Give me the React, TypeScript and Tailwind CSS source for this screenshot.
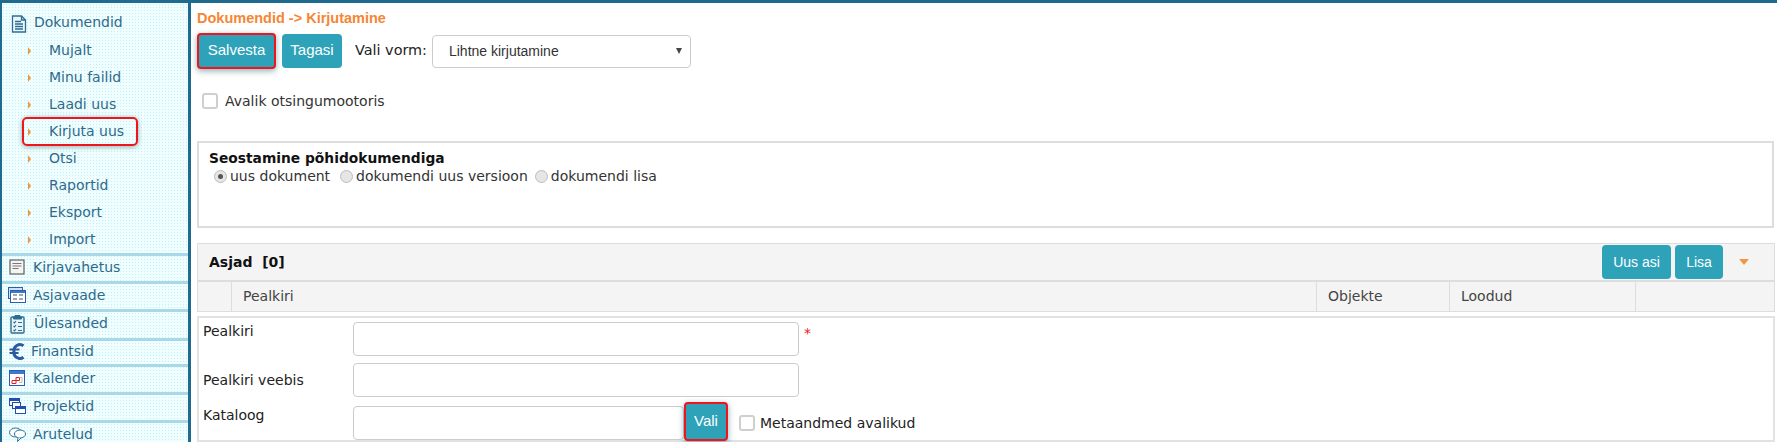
import React from 'react';

const VERDANA = "font-['DejaVu_Sans',sans-serif]";
const ARIAL = "font-['Liberation_Sans',sans-serif]";

const DocIcon = () => (
  <svg width="16" height="18" viewBox="0 0 16 18" fill="none" stroke="#2a6f93" strokeWidth="1.3">
    <path d="M1.5 1h9l4 4v12h-13z" fill="#eef7fb" />
    <path d="M10.5 1v4h4" />
    <path d="M4 6.5h6M4 9h8M4 11.5h8M4 14h8" />
  </svg>
);

const MailIcon = () => (
  <svg width="16" height="16" viewBox="0 0 16 16" fill="none">
    <rect x="1" y="1" width="14" height="14" fill="#f4f4f4" stroke="#444" />
    <path d="M3.5 4.5h9M3.5 7h9M3.5 9.5h6" stroke="#777" />
  </svg>
);

const CaseIcon = () => (
  <svg width="18" height="16" viewBox="0 0 18 16" fill="none">
    <rect x="0.5" y="0.5" width="14" height="11" fill="#cfe3f7" stroke="#2a5fb0" />
    <rect x="2.5" y="3.5" width="15" height="12" fill="#fff" stroke="#2a5fb0" />
    <path d="M3 4h14v2H3z" fill="#3b78cf" />
    <path d="M14 1h1v1h-1z" fill="#e33" />
    <path d="M5 8h4M11 8h4M5 12h4M11 12h4" stroke="#888" strokeWidth="1.5" />
  </svg>
);

const TaskIcon = () => (
  <svg width="15" height="20" viewBox="0 0 15 20" fill="none" stroke="#2a6f93">
    <rect x="1" y="3" width="13" height="16" rx="1" fill="#e9f4f8" strokeWidth="1.4" />
    <path d="M5 3V1.5h5V3h1.500v2h-8V3z" fill="#2a6f93" />
    <path d="M3.500 8l1 1 1.500-2M3.500 12l1 1 1.500-2M3.500 16l1 1 1.500-2M8 8.500h4M8 12.500h4M8 16.500h4" strokeWidth="1.100" />
  </svg>
);

const EuroIcon = () => (
  <svg width="16" height="17" viewBox="0 0 16 17" fill="none">
    <path d="M14.500 2.800A6 6 0 0 0 5 8.500a6 6 0 0 0 9.500 5.700" stroke="#2c5aa0" strokeWidth="3" />
    <path d="M0.500 6.500h10M0.500 10h9" stroke="#2c5aa0" strokeWidth="2" />
  </svg>
);

const CalendarIcon = () => (
  <svg width="16" height="16" viewBox="0 0 16 16" fill="none">
    <rect x="0.500" y="0.500" width="15" height="15" fill="#fff" stroke="#2a5fb0" />
    <path d="M1 1h14v3H1z" fill="#3b78cf" />
    <path d="M3 10.500h4v3H3zM7 7.500h3.500v3H7z" stroke="#e02020" />
    <path d="M10.500 7.500H13v5h-3" stroke="#bbb" />
  </svg>
);

const ProjectIcon = () => (
  <svg width="17" height="16" viewBox="0 0 17 16" fill="none">
    <rect x="0.500" y="0.500" width="10" height="7" fill="#fff" stroke="#1f4fb0" />
    <path d="M1 1h9v2H1z" fill="#1f4fb0" />
    <rect x="3.500" y="4.500" width="8" height="6" fill="#fff" stroke="#1f4fb0" />
    <rect x="6.500" y="8.500" width="10" height="7" fill="#fff" stroke="#1f4fb0" />
    <path d="M7 9h9v2H7z" fill="#1f4fb0" />
  </svg>
);

const ChatIcon = () => (
  <svg width="17" height="15" viewBox="0 0 17 15" fill="none" stroke="#2a6f93">
    <ellipse cx="6.500" cy="5.500" rx="6" ry="4.500" fill="#fff" />
    <ellipse cx="11" cy="7" rx="5.500" ry="4" fill="#fff" />
    <path d="M9 10.500l-0.500 4 3.500-3.500" fill="#fff" />
  </svg>
);

const Arrow = () => (
  <span className="border-y-[4px] border-l-[3px] border-y-transparent border-l-[#f0983e]" />
);

const SubItem = ({ label, marked }: { label: string; marked?: boolean }) => (
  <div
    className={`relative flex h-[27px] items-center pl-[26px] ${
      marked ? 'z-10' : ''
    }`}
  >
    {marked && (
      <div className="absolute left-[20px] top-[-1px] h-[29px] w-[116px] rounded-[5px] border-2 border-[#f0141e] shadow-[0_1px_5px_rgba(0,60,60,0.4)]" />
    )}
    <Arrow />
    <span className="ml-[18px]">{label}</span>
  </div>
);

const MainItem = ({ icon, label, textPad, height }: { icon: React.ReactNode; label: string; textPad: string; height: string }) => (
  <div className={`flex items-center border-t-[3px] border-[#a9d8e8] pb-[3px] ${height}`}>
    <div className="flex w-[6px]" />
    <div className="flex w-[18px] justify-center">{icon}</div>
    <span className={textPad}>{label}</span>
  </div>
);

const Btn = ({ label, className }: { label: string; className: string }) => (
  <button className={`${ARIAL} rounded-[4px] bg-[#2ea2b8] text-center text-white ${className}`}>{label}</button>
);

const CheckBox = () => <span className="h-[16px] w-[16px] shrink-0 rounded-[3px] border-2 border-[#cfcfcf] bg-white" />;

const Radio = ({ checked }: { checked?: boolean }) => (
  <span className="flex h-[13px] w-[13px] shrink-0 items-center justify-center rounded-full border border-[#bdbdbd] bg-[#e6e6e6]">
    {checked && <span className="h-[5px] w-[5px] rounded-full bg-[#555]" />}
  </span>
);

const TextBox = ({ className }: { className: string }) => (
  <input className={`rounded-[4px] border border-[#ccc] bg-white ${className}`} />
);

export default function App() {
  return (
    <div className={`h-[442px] w-[1777px] overflow-hidden border-t-[3px] border-[#1f6a8f] bg-white ${VERDANA}`}>
      <div className="flex h-[439px]">
        {/* left menu */}
        <aside className="h-full w-[191px] shrink-0 overflow-hidden border-l-2 border-r-[3px] border-[#1f6a8f] bg-[#f0feff] bg-[radial-gradient(#bff0f6_0.7px,transparent_0.8px)] bg-[length:3px_3px] text-[14px] text-[#2f6a8c]">
          <div className="flex h-[31px] items-end pb-[1px] pl-[9px]">
            <DocIcon />
            <span className="ml-[7px]">Dokumendid</span>
          </div>
          <div className="mt-[2px] h-[217px] pt-[1px]">
            {['Mujalt', 'Minu failid', 'Laadi uus'].map(label => (
              <SubItem key={label} label={label} />
            ))}
            <SubItem label="Kirjuta uus" marked />
            {['Otsi', 'Raportid', 'Eksport', 'Import'].map(label => (
              <SubItem key={label} label={label} />
            ))}
          </div>
          <MainItem icon={<MailIcon />} label="Kirjavahetus" textPad="ml-[7px]" height="h-[28px]" />
          <MainItem icon={<CaseIcon />} label="Asjavaade" textPad="ml-[7px]" height="h-[28px]" />
          <MainItem icon={<TaskIcon />} label="Ülesanded" textPad="ml-[8px]" height="h-[29px]" />
          <MainItem icon={<EuroIcon />} label="Finantsid" textPad="ml-[5px]" height="h-[26px]" />
          <MainItem icon={<CalendarIcon />} label="Kalender" textPad="ml-[7px]" height="h-[28px]" />
          <MainItem icon={<ProjectIcon />} label="Projektid" textPad="ml-[7px]" height="h-[28px]" />
          <MainItem icon={<ChatIcon />} label="Arutelud" textPad="ml-[7px]" height="h-[28px]" />
        </aside>

        {/* content */}
        <main className="min-w-0 flex-1 pl-[6px] pr-[2px]">
          <div className={`${ARIAL} mt-[8px] h-[15px] text-[14.500px] font-bold leading-[15px] text-[#f58634]`}>Dokumendid -&gt; Kirjutamine</div>

          <div className="mt-[7px] flex h-[35px] items-center">
            <Btn label="Salvesta" className="h-[36px] w-[79px] border-2 border-[#f0141e] text-[15px] shadow-[0_2px_6px_rgba(0,80,90,0.45)]" />
            <Btn label="Tagasi" className="ml-[6px] h-[34px] w-[60px] text-[15px]" />
            <span className="ml-[13px] text-[14.400px] text-[#222]">Vali vorm:</span>
            <div className="relative ml-[5px] mt-[1px]">
              <select className={`${ARIAL} h-[33px] w-[259px] appearance-none rounded-[4px] border border-[#ccc] bg-white pl-[16px] text-[14px] text-[#333]`}>
                <option>Lihtne kirjutamine</option>
              </select>
              <span className="absolute right-[9px] top-[13px] border-x-[3.500px] border-t-[6px] border-x-transparent border-t-[#444]" />
            </div>
          </div>

          <div className="ml-[5px] mt-[24px] flex h-[18px] items-center text-[14px] text-[#333]">
            <CheckBox />
            <span className="ml-[7px]">Avalik otsingumootoris</span>
          </div>

          <section className="mt-[31px] h-[87px] w-[1577px] border-2 border-[#ddd] px-[10px] pt-[6px] text-[14px] text-[#333]">
            <div className="text-[13.800px] font-bold leading-[18px] text-[#111]">Seostamine põhidokumendiga</div>
            <div className="flex h-[18px] items-center pl-[5px]">
              <Radio checked />
              <span className="ml-[3px]">uus dokument</span>
              <span className="ml-[10px]"><Radio /></span>
              <span className="ml-[3px]">dokumendi uus versioon</span>
              <span className="ml-[7px]"><Radio /></span>
              <span className="ml-[3px]">dokumendi lisa</span>
            </div>
          </section>

          <section className="mt-[15px] w-[1578px] border border-[#ddd] bg-[#f4f4f4]">
            <div className="flex h-[38px] items-center border-b-2 border-[#ddd] pl-[11px]">
              <span className="mt-[1px] text-[14px] font-bold text-[#111]">Asjad&nbsp; [0]</span>
              <Btn label="Uus asi" className="ml-auto h-[34px] w-[69px] text-[14px]" />
              <Btn label="Lisa" className="ml-[4px] h-[34px] w-[48px] text-[14px]" />
              <span className="ml-[16px] mr-[25px] border-x-[5.500px] border-t-[6px] border-x-transparent border-t-[#f0983e]" />
            </div>
            <div className="flex h-[29px] items-center text-[14px] text-[#444]">
              <div className="h-full w-[34px] border-r border-[#ddd]" />
              <div className="flex h-full w-[1085px] items-center border-r border-[#ddd] pl-[11px]">Pealkiri</div>
              <div className="flex h-full w-[133px] items-center border-r border-[#ddd] pl-[11px]">Objekte</div>
              <div className="flex h-full w-[186px] items-center border-r border-[#ddd] pl-[11px]">Loodud</div>
            </div>
          </section>

          <section className="mt-[4px] w-[1578px] border-2 border-[#e2e2e2] pl-[4px] pt-[4px] text-[14px] text-[#222]">
            <div className="flex h-[34px]">
              <label className="-mt-[1px] w-[150px]">Pealkiri</label>
              <TextBox className="h-[34px] w-[446px]" />
              <span className="ml-[5px] mt-[1px] text-[#f0141e]">*</span>
            </div>
            <div className="mt-[7px] flex h-[34px] items-center">
              <label className="w-[150px]">Pealkiri veebis</label>
              <TextBox className="h-[34px] w-[446px]" />
            </div>
            <div className="mt-[9px] flex h-[34px]">
              <label className="-mt-[1px] w-[150px]">Kataloog</label>
              <TextBox className="h-[34px] w-[331px]" />
              <Btn label="Vali" className="-mt-[4px] h-[39px] w-[44px] border-2 border-[#f0141e] text-[15px] shadow-[0_2px_6px_rgba(0,80,90,0.45)]" />
              <div className="ml-[11px] flex items-center">
                <CheckBox />
                <span className="ml-[5px]">Metaandmed avalikud</span>
              </div>
            </div>
          </section>
        </main>
      </div>
    </div>
  );
}
